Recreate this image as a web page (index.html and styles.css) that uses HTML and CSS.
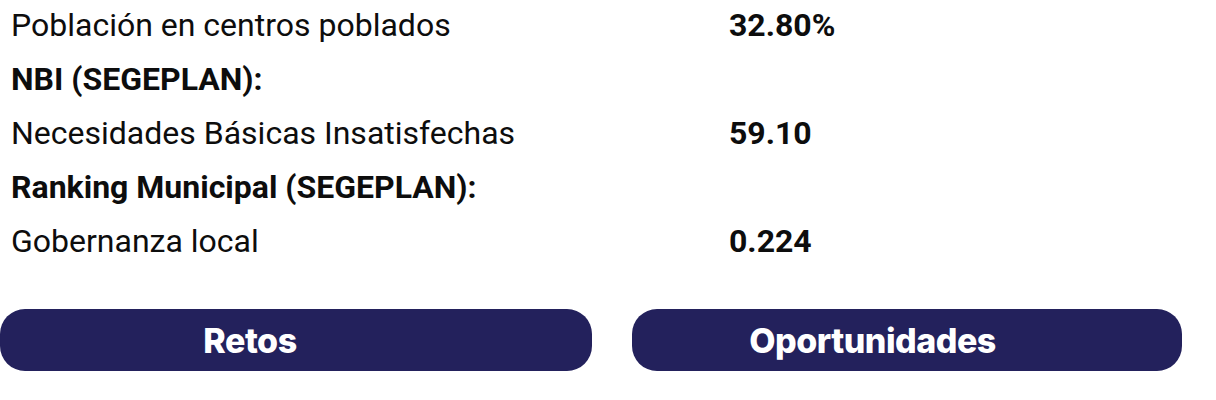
FILE: index.html
```html
<!DOCTYPE html>
<html lang="es">
<head>
  <meta charset="UTF-8">
  <meta name="viewport" content="width=device-width, initial-scale=1.0">
  <title>Indicadores municipales</title>
  <link rel="stylesheet" href="styles.css">
</head>
<body>
  <div class="indicators">
    <div class="row">
      <div class="label">Población en centros poblados</div>
      <div class="value">32.80%</div>
    </div>
    <div class="row">
      <div class="label section">NBI (SEGEPLAN):</div>
    </div>
    <div class="row">
      <div class="label">Necesidades Básicas Insatisfechas</div>
      <div class="value">59.10</div>
    </div>
    <div class="row">
      <div class="label section">Ranking Municipal (SEGEPLAN):</div>
    </div>
    <div class="row">
      <div class="label">Gobernanza local</div>
      <div class="value">0.224</div>
    </div>
  </div>

  <div class="buttons">
    <button class="btn btn-retos">Retos</button>
    <button class="btn btn-oportunidades">Oportunidades</button>
  </div>
</body>
</html>
```

FILE: styles.css
```css
/* GENERAL */
body {
  margin: 0;
  background-color: #fff;
  font-family: 'Roboto', 'Liberation Sans', sans-serif;
  color: #0d0d0d;
}

.indicators {
  padding-left: 11px;
  margin-top: -2px;
}

.row {
  display: grid;
  grid-template-columns: 718px 1fr;
  height: 54px;
  line-height: 54px;
  font-size: 32px;
}

.section {
  font-weight: bold;
}

.value {
  font-weight: bold;
}

/* Buttons */
.buttons {
  display: flex;
  gap: 40px;
  margin-top: 41px;
}

.btn {
  background-color: #23215c;
  color: #fff;
  border: none;
  border-radius: 25px;
  height: 62px;
  font-family: 'Inter', sans-serif;
  font-weight: 800;
  font-size: 34px;
  letter-spacing: -0.5px;
  cursor: pointer;
  padding: 0;
}

.btn-retos {
  width: 592px;
  padding-right: 92px; /* texto algo a la izquierda del centro */
}

.btn-oportunidades {
  width: 550px;
  padding-right: 69px;
}
```
